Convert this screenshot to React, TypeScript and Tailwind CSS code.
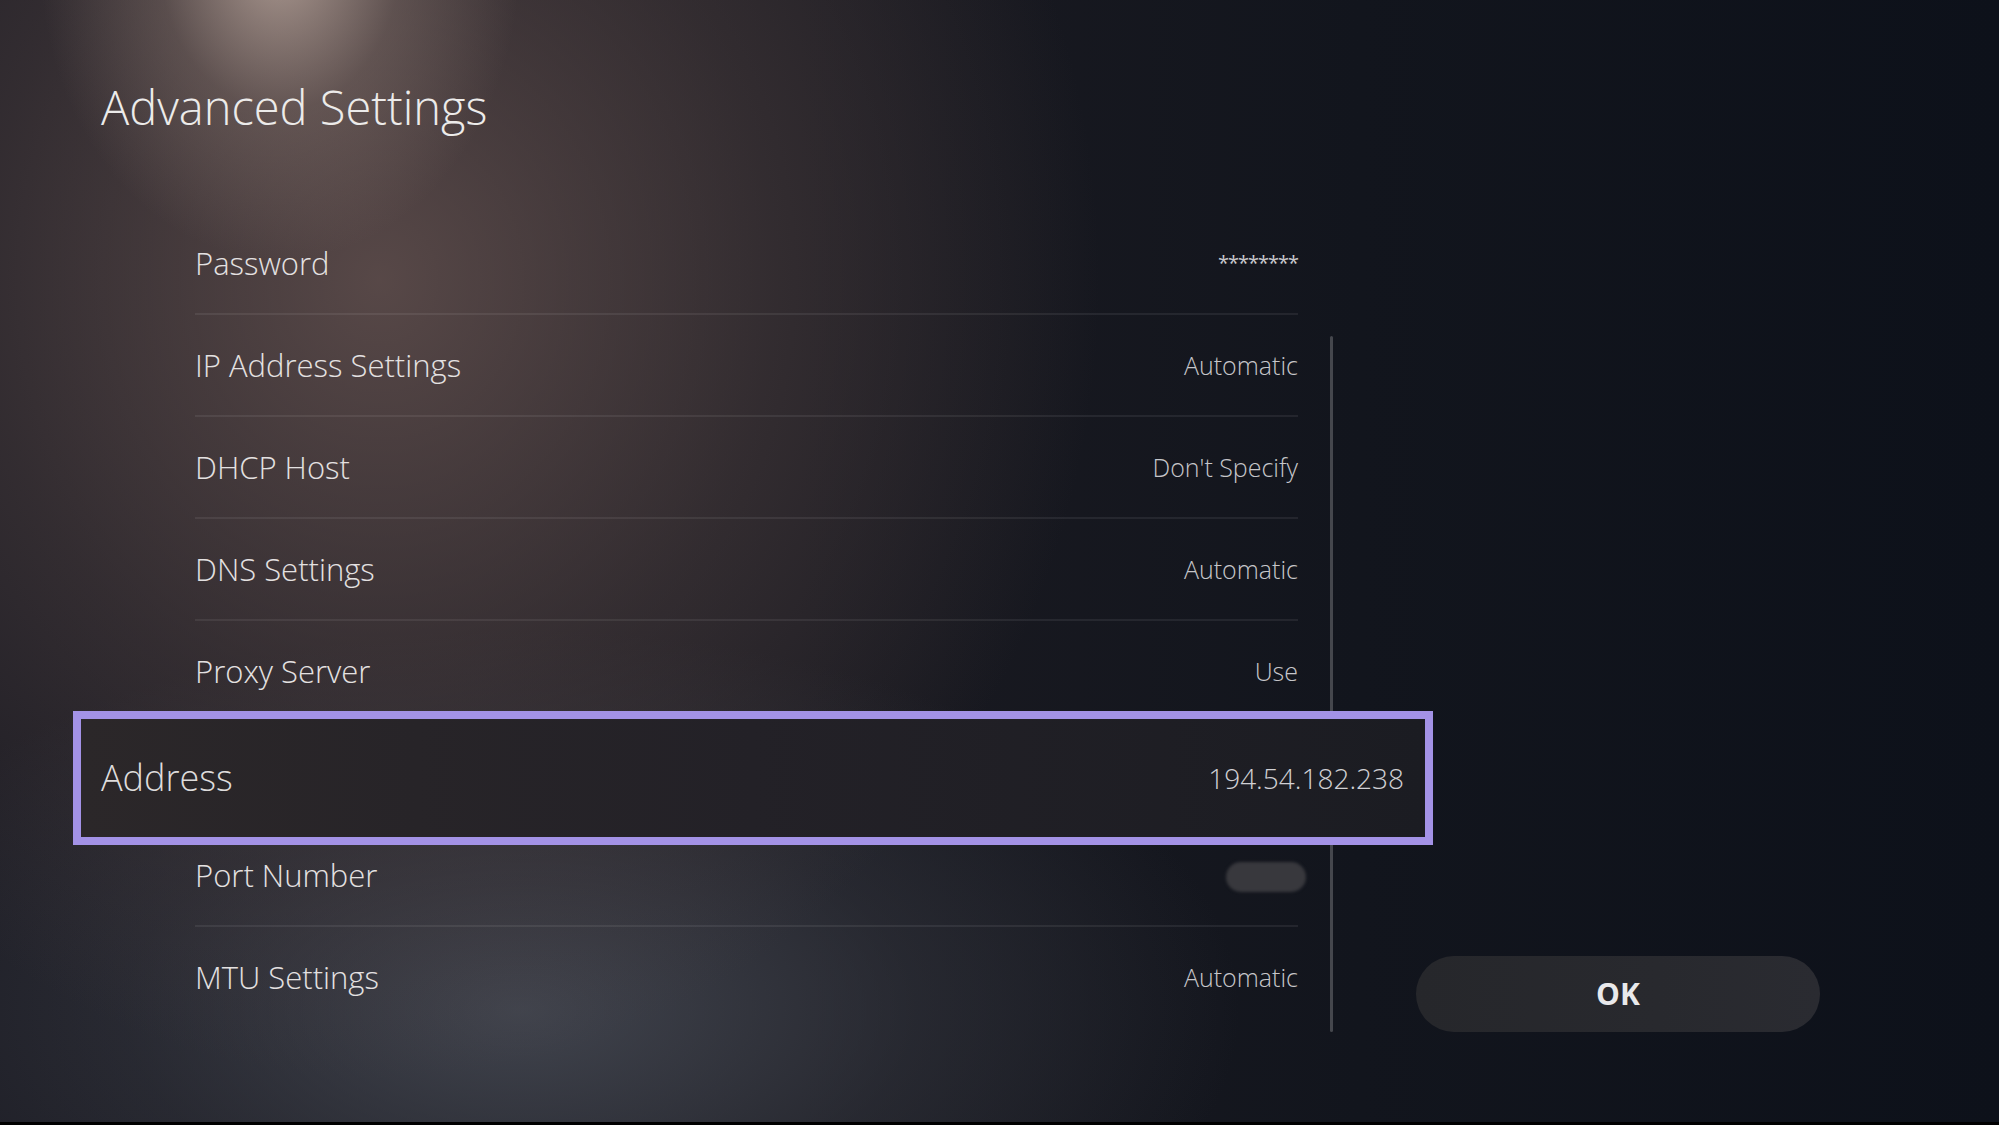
import React from "react";

type Row = { label: string; value?: string; kind?: "stars" | "pill"; divider: boolean };

const topRows: Row[] = [
  { label: "Password", value: "********", kind: "stars", divider: true },
  { label: "IP Address Settings", value: "Automatic", divider: true },
  { label: "DHCP Host", value: "Don't Specify", divider: true },
  { label: "DNS Settings", value: "Automatic", divider: true },
  { label: "Proxy Server", value: "Use", divider: false },
];

const bottomRows: Row[] = [
  { label: "Port Number", kind: "pill", divider: true },
  { label: "MTU Settings", value: "Automatic", divider: false },
];

function SettingRow({ row }: { row: Row }) {
  return (
    <div
      className={
        row.divider
          ? "flex h-[102px] items-center justify-between border-b-2 border-white/[0.07]"
          : "flex h-[102px] items-center justify-between border-b-2 border-transparent"
      }
    >
      <span className="text-[31px] font-light leading-none text-[#e4e1e1]">{row.label}</span>
      {row.kind === "stars" ? (
        <span className="text-[20px] leading-none tracking-[-1px] text-[#c9c9cd]">{row.value}</span>
      ) : row.kind === "pill" ? (
        <span className="-mr-2 mt-1 h-[30px] w-[80px] rounded-full bg-[#38383d] blur-[1.5px]" />
      ) : (
        <span className="text-[25px] font-light leading-none text-[#c6c6ca]">{row.value}</span>
      )}
    </div>
  );
}

export default function App() {
  return (
    <div
      className="relative h-[1125px] w-full overflow-hidden border-b-[3px] border-black bg-[radial-gradient(ellipse_240px_300px_at_280px_-40px,rgba(190,170,160,0.85)_0%,rgba(150,130,122,0.35)_50%,transparent_100%),radial-gradient(ellipse_720px_800px_at_380px_280px,rgba(98,80,78,0.85)_0%,rgba(80,66,66,0.45)_55%,transparent_100%),radial-gradient(ellipse_720px_380px_at_520px_1010px,rgba(74,78,88,0.8)_0%,rgba(60,63,72,0.4)_55%,transparent_100%),linear-gradient(90deg,#1b1b23_0%,#1a1a21_40%,#12151d_68%,#0d111a_100%)] font-['Open_Sans',sans-serif]"
    >
      <h1 className="pl-[101px] pt-[84px] text-[47px] font-light leading-none text-[#ecebea]">
        Advanced Settings
      </h1>

      <div className="mt-[82px] flex items-start">
        {/* list */}
        <div className="ml-[195px] flex w-[1103px] flex-col">
          {topRows.map((r) => (
            <SettingRow key={r.label} row={r} />
          ))}

          {/* focused row */}
          <div className="relative z-10 -mb-[20px] -ml-[122px] -mr-[135px] -mt-[12px] flex h-[134px] items-center justify-between border-[8px] border-[#a392e6] bg-[linear-gradient(90deg,#2b2729_0%,#232127_50%,#1b1c22_100%)] pl-[20px] pr-[21px]">
            <span className="text-[36px] font-light leading-none text-[#dedcdc]">Address</span>
            <span className="text-[28px] font-light leading-none text-[#d0d0d4]">194.54.182.238</span>
          </div>

          {bottomRows.map((r) => (
            <SettingRow key={r.label} row={r} />
          ))}
        </div>

        {/* scrollbar */}
        <div className="ml-[32px] mt-[123px] h-[696px] w-[3px] rounded-full bg-[#45474d]" />

        {/* OK button */}
        <div className="ml-[83px] mt-[743px] flex h-[76px] w-[404px] items-center justify-center rounded-full bg-[linear-gradient(90deg,#26272b_0%,#28292e_60%,#2a2b31_100%)]">
          <span className="text-[30px] font-bold leading-none text-[#e9e9eb]">OK</span>
        </div>
      </div>
    </div>
  );
}
